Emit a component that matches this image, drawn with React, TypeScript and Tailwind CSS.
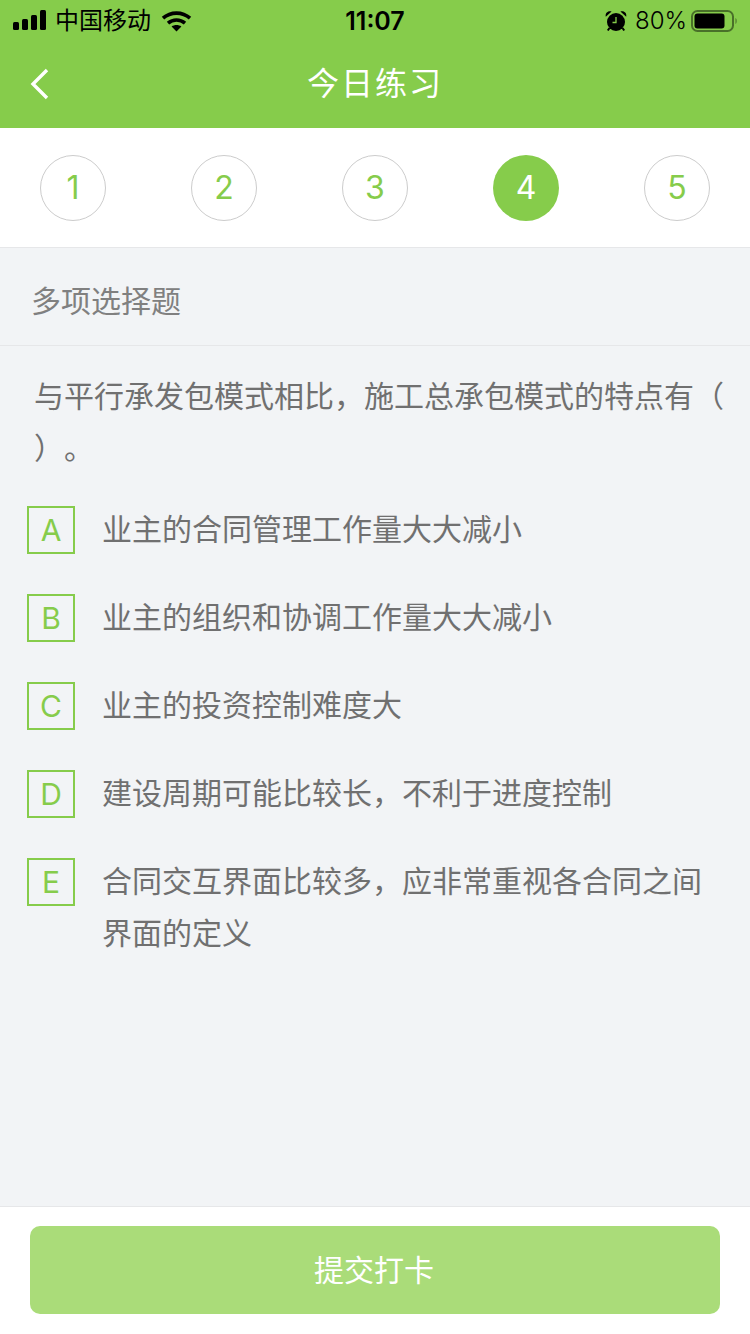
const font = "font-['Inter','Noto_Sans_CJK_SC',sans-serif]"

const steps = [1, 2, 3, 4, 5]

const options = [
  { key: "A", text: "业主的合同管理工作量大大减小" },
  { key: "B", text: "业主的组织和协调工作量大大减小" },
  { key: "C", text: "业主的投资控制难度大" },
  { key: "D", text: "建设周期可能比较长，不利于进度控制" },
  { key: "E", text: "合同交互界面比较多，应非常重视各合同之间界面的定义" },
]

function StatusBar() {
  return (
    <div className="grid h-10 grid-cols-3 items-center pt-[2px] text-black">
      <div className="flex items-center pl-[13px]">
        <svg width="34" height="22" viewBox="0 0 34 22" fill="#000">
          <rect x="0" y="12" width="6" height="8" rx="1.5" />
          <rect x="9" y="9" width="6" height="11" rx="1.5" />
          <rect x="18" y="5" width="6" height="15" rx="1.5" />
          <rect x="27" y="0" width="6" height="20" rx="1.5" />
        </svg>
        <span className="ml-2 text-[24px] leading-none">中国移动</span>
        <svg className="ml-[10px]" width="31" height="22" viewBox="0 0 31 22" fill="none" stroke="#000" strokeWidth="3.6">
          <path d="M2 8.2C9.6 1.4 21.4 1.4 29 8.2" />
          <path d="M7 13.2C11.9 9 19.1 9 24 13.2" />
          <path d="M15.5 21.5L10.6 16.6C13.4 14.6 17.6 14.6 20.4 16.6Z" fill="#000" stroke="none" />
        </svg>
      </div>
      <div className="text-center text-[25px] leading-none font-semibold">11:07</div>
      <div className="flex items-center justify-end pr-[12px]">
        <svg width="22" height="22" viewBox="0 0 22 22" fill="#000">
          <circle cx="11" cy="12" r="9" />
          <path d="M0.8 6.8C0 3 3 0.4 6.6 1.6ZM21.2 6.8C22 3 19 0.4 15.4 1.6Z" />
          <path d="M4.5 18L2.8 20.5M17.5 18L19.2 20.5" stroke="#000" strokeWidth="2" />
          <path d="M11 7V12.5H7.5" fill="none" stroke="#86cc4b" strokeWidth="1.3" />
        </svg>
        <span className="ml-2 text-[24px] leading-none font-light">80%</span>
        <svg className="ml-[4px]" width="47" height="22" viewBox="0 0 47 22">
          <rect x="1" y="1" width="41" height="20" rx="5.5" fill="none" stroke="#000" strokeOpacity="0.45" strokeWidth="2" />
          <rect x="3.5" y="3.5" width="30" height="15" rx="3" fill="#000" />
          <path d="M44.5 8C46 8.6 46 13.4 44.5 14Z" fill="#000" fillOpacity="0.45" />
        </svg>
      </div>
    </div>
  )
}

export default function App() {
  return (
    <div className={`flex h-[1334px] w-[750px] flex-col overflow-hidden bg-[#f2f4f6] ${font}`}>
      <div className="h-32 bg-[#86cc4b]">
        <StatusBar />
        <div className="grid h-[88px] grid-cols-3 items-center">
          <div className="pl-[30px] pb-[1px]">
            <svg width="20" height="32" viewBox="0 0 20 32" fill="none" stroke="#fff" strokeWidth="3.4">
              <path d="M17 2L3 16L17 30" />
            </svg>
          </div>
          <div className="text-center text-[32px] leading-none tracking-[2px] whitespace-nowrap text-white">今日练习</div>
        </div>
      </div>

      <div className="flex h-[120px] justify-between border-b border-[#e6e7e9] bg-white px-10 pt-[27px]">
        {steps.map((n) =>
          n === 4 ? (
            <div key={n} className="flex h-[66px] w-[66px] items-center justify-center rounded-full bg-[#86cc4b] text-[32px] text-white">
              {n}
            </div>
          ) : (
            <div key={n} className="flex h-[66px] w-[66px] items-center justify-center rounded-full border border-[#cccccc] text-[32px] text-[#86cc4b]">
              {n}
            </div>
          ),
        )}
      </div>

      <div className="flex h-[98px] items-center border-b border-[#e6e7e9] pt-2 pl-[31px] text-[30px] leading-none text-[#808080]">多项选择题</div>

      <div className="flex flex-1 flex-col pt-6">
        <div className="pr-[26px] pl-[34px] text-[30px] leading-[52px] text-[#707070] [text-spacing-trim:space-all]">与平行承发包模式相比，施工总承包模式的特点有（ ）。</div>
        <div className="mt-[29px] flex flex-col gap-9">
          {options.map((o) => (
            <div key={o.key} className="flex pr-[40px] pl-[27px]">
              <div className="mt-[3px] flex h-12 w-12 shrink-0 items-center justify-center border-2 border-[#86cc4b] text-[30px] leading-none text-[#86cc4b]">
                {o.key}
              </div>
              <div className="ml-[27px] text-[30px] leading-[52px] text-[#707070]">{o.text}</div>
            </div>
          ))}
        </div>
      </div>

      <div className="h-32 border-t border-[#e6e7e9] bg-white px-[30px] pt-[19px]">
        <div className="flex h-[88px] items-center justify-center rounded-[10px] bg-[#aadc79] pr-[2px] text-[30px] leading-none text-white">提交打卡</div>
      </div>
    </div>
  )
}
